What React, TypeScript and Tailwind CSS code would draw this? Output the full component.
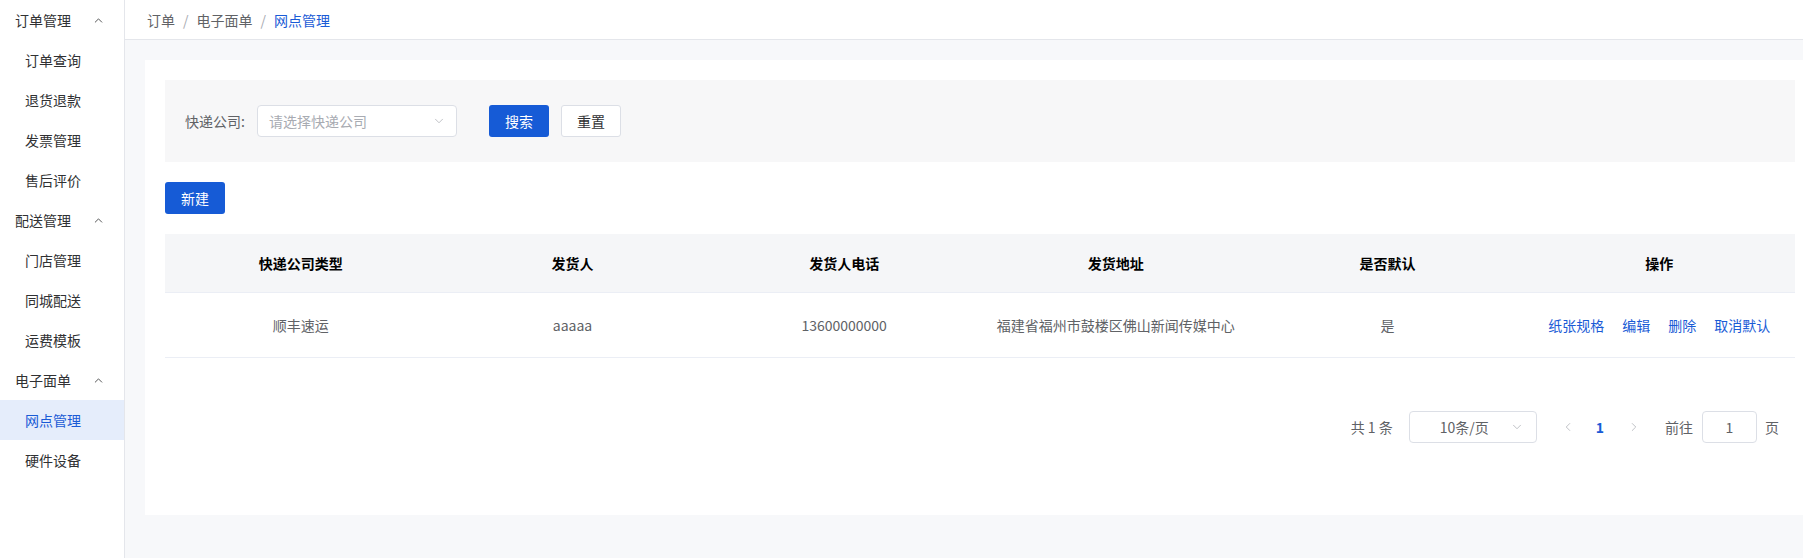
import * as React from 'react';
import { ChevronUp, ChevronDown, ChevronLeft, ChevronRight } from 'lucide-react';

const menu = [
	{ title: '订单管理', items: ['订单查询', '退货退款', '发票管理', '售后评价'] },
	{ title: '配送管理', items: ['门店管理', '同城配送', '运费模板'] },
	{ title: '电子面单', items: ['网点管理', '硬件设备'] },
];

const columns = ['快递公司类型', '发货人', '发货人电话', '发货地址', '是否默认', '操作'];

const rows = [
	{ company: '顺丰速运', sender: 'aaaaa', phone: '13600000000', address: '福建省福州市鼓楼区佛山新闻传媒中心', isDefault: '是' },
];

export default function App() {
	return (
		<div className="flex h-[558px] w-[1803px] overflow-hidden text-sm text-[#303133] font-['Noto_Sans_CJK_SC','Noto_Sans',sans-serif]">
			{/* sidebar */}
			<aside className="w-[125px] shrink-0 border-r border-[#e4e6eb] bg-white">
				{menu.map((group) => (
					<div key={group.title}>
						<div className="flex h-10 items-center justify-between pl-[15px] pr-[19px] text-[#303133]">
							<span>{group.title}</span>
							<ChevronUp size={13} strokeWidth={1.5} className="text-[#303133]" />
						</div>
						{group.items.map((item) => (
							<div
								key={item}
								className={
									item === '网点管理'
										? 'flex h-10 items-center bg-[#e5edfb] pl-[25px] text-[#1a5bd6]'
										: 'flex h-10 items-center pl-[25px] text-[#303133]'
								}
							>
								{item}
							</div>
						))}
					</div>
				))}
			</aside>

			<div className="flex min-w-0 flex-1 flex-col bg-[#f7f8fa]">
				{/* breadcrumb */}
				<header className="flex h-10 shrink-0 items-center border-b border-[#e4e6eb] bg-white pl-[22px]">
					<span className="text-[#606266]">订单</span>
					<span className="mx-[8px] text-[#a8abb2]">/</span>
					<span className="text-[#606266]">电子面单</span>
					<span className="mx-[8px] text-[#a8abb2]">/</span>
					<span className="text-[#1a5bd6]">网点管理</span>
				</header>

				<div className="pl-5 pt-5">
					<div className="h-[455px] w-[1670px] bg-white p-5">
						{/* search */}
						<div className="flex h-[82px] items-center bg-[#f7f7f8] pl-5">
							<span className="mr-3 text-[#606266]">快递公司:</span>
							<div className="flex h-8 w-[200px] items-center justify-between rounded border border-[#dcdfe6] bg-white pl-[11px] pr-[10px]">
								<span className="text-[#a8abb2]">请选择快递公司</span>
								<ChevronDown size={14} strokeWidth={1.25} className="text-[#a8abb2]" />
							</div>
							<button className="ml-8 h-8 w-[60px] rounded-[3px] bg-[#165bd6] text-white">搜索</button>
							<button className="ml-3 h-8 w-[60px] rounded-[3px] border border-[#dcdfe6] bg-white text-[#303133]">重置</button>
						</div>

						<button className="mt-5 h-8 w-[60px] rounded-[3px] bg-[#165bd6] text-white">新建</button>

						{/* table */}
						<div className="mt-5">
							<div className="grid h-[59px] grid-cols-6 items-center border-b border-[#ebeef5] bg-[#f5f6f8] font-bold text-black">
								{columns.map((c) => (
									<div key={c} className="text-center">{c}</div>
								))}
							</div>
							{rows.map((r) => (
								<div key={r.phone} className="grid h-[65px] grid-cols-6 items-center border-b border-[#ebeef5] text-[#606266]">
									<div className="text-center">{r.company}</div>
									<div className="text-center">{r.sender}</div>
									<div className="text-center">{r.phone}</div>
									<div className="text-center">{r.address}</div>
									<div className="text-center">{r.isDefault}</div>
									<div className="flex items-center justify-center gap-[18px] text-[#1a5bd6]">
										<span>纸张规格</span>
										<span>编辑</span>
										<span>删除</span>
										<span>取消默认</span>
									</div>
								</div>
							))}
						</div>

						{/* pagination */}
						<div className="mt-[53px] flex h-8 items-center justify-end pr-4 text-[#606266]">
							<span>共 1 条</span>
							<div className="ml-4 flex h-8 w-32 items-center justify-between rounded border border-[#dcdfe6] pl-[30px] pr-[12px]">
								<span>10条/页</span>
								<ChevronDown size={14} strokeWidth={1.25} className="text-[#a8abb2]" />
							</div>
							<ChevronLeft size={14} strokeWidth={1.25} className="ml-[24px] text-[#a8abb2]" />
							<span className="ml-[21px] font-bold text-[#1a5bd6]">1</span>
							<ChevronRight size={14} strokeWidth={1.25} className="ml-[23px] text-[#a8abb2]" />
							<span className="ml-[24px]">前往</span>
							<div className="ml-[9px] flex h-8 w-[55px] items-center justify-center rounded border border-[#dcdfe6]">1</div>
							<span className="ml-2">页</span>
						</div>
					</div>
				</div>
			</div>
		</div>
	);
}
